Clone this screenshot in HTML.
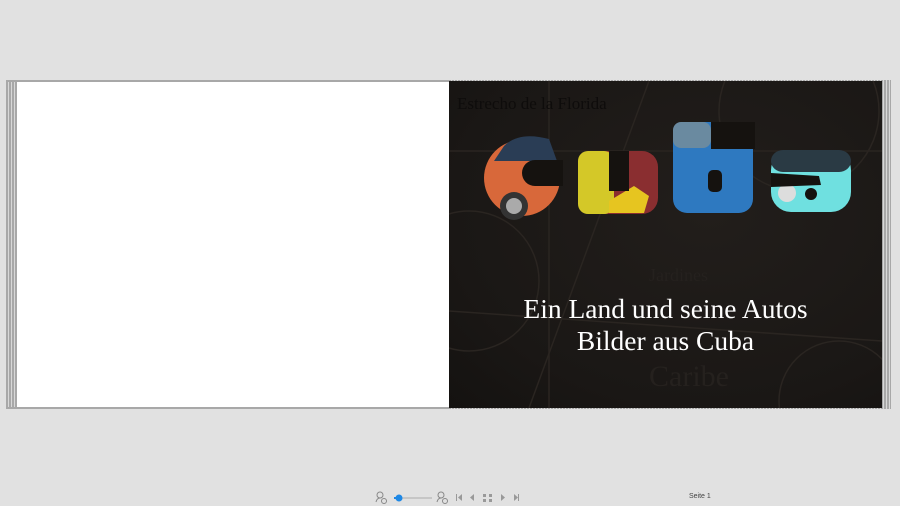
<!DOCTYPE html>
<html><head><meta charset="utf-8"><style>
html,body{margin:0;padding:0;width:900px;height:506px;background:#e1e1e1;overflow:hidden;font-family:"Liberation Sans",sans-serif;}
.abs{position:absolute}
</style></head><body>
<div class="abs" style="left:6px;top:80px;width:12px;height:329px;background:repeating-linear-gradient(90deg,#a8a8a8 0 2px,#d8d8d8 2px 3px);"></div>
<div class="abs" style="left:6px;top:80px;width:444px;height:2px;background:#a8a8a8"></div>
<div class="abs" style="left:6px;top:407px;width:444px;height:2px;background:#a8a8a8"></div>
<div class="abs" style="left:17px;top:82px;width:432px;height:325px;background:#fff"></div>
<div class="abs" style="left:449px;top:80px;width:442px;height:329px;background:repeating-linear-gradient(90deg,#a8a8a8 0 2px,#d8d8d8 2px 3px);"></div>
<div class="abs" style="left:449px;top:81px;width:433px;height:327px;background:radial-gradient(ellipse at 60% 40%,#221e1b,#1a1715 70%,#141210);overflow:hidden">
<svg width="433" height="327" style="position:absolute;left:0;top:0">
<g fill="none" stroke="#2a2521" stroke-width="1.5">
<circle cx="350" cy="30" r="80"/><circle cx="20" cy="200" r="70"/><circle cx="390" cy="320" r="60"/>
<line x1="0" y1="70" x2="433" y2="70"/><line x1="100" y1="0" x2="100" y2="327"/><line x1="0" y1="230" x2="433" y2="260"/><line x1="200" y1="0" x2="80" y2="327"/>
</g>
<text x="8" y="28" font-family="Liberation Serif" font-size="17" fill="#0e0c0b">Estrecho de la Florida</text>
<text x="200" y="305" font-family="Liberation Serif" font-size="30" fill="#25211e">Caribe</text>
<text x="200" y="200" font-family="Liberation Serif" font-size="18" fill="#25211e">Jardines</text>
<g>
<circle cx="73" cy="97" r="38" fill="#d8683a"/>
<path d="M55 65 Q70 50 100 58 L108 80 L45 80Z" fill="#2a3d55"/>
<circle cx="65" cy="125" r="14" fill="#333"/><circle cx="65" cy="125" r="8" fill="#aaa"/>
<circle cx="86" cy="92" r="13" fill="#15120f"/><rect x="86" y="79" width="28" height="26" fill="#15120f"/>
<rect x="129" y="70" width="80" height="63" rx="16" fill="#8a2e30"/>
<rect x="129" y="70" width="36" height="63" rx="10" fill="#d4c828"/>
<path d="M160 120 L185 105 L200 115 L195 132 L160 132Z" fill="#e6c520"/>
<rect x="160" y="70" width="20" height="40" fill="#15120f"/>
<rect x="224" y="41" width="80" height="91" rx="14" fill="#2e79c0"/>
<rect x="262" y="41" width="44" height="27" fill="#15120f"/>
<rect x="224" y="41" width="38" height="26" rx="8" fill="#6a8aa0"/>
<rect x="259" y="89" width="14" height="22" rx="5" fill="#15120f"/>
<rect x="322" y="69" width="80" height="62" rx="20" fill="#6fe0e0"/>
<rect x="322" y="69" width="80" height="22" rx="12" fill="#2a3a44"/>
<circle cx="338" cy="112" r="9" fill="#ddd"/>
<path d="M322 92 L370 95 L372 104 L322 106Z" fill="#15120f"/>
<circle cx="362" cy="113" r="6" fill="#15120f"/>
</g>
</svg>
<div class="abs" style="left:0;width:433px;top:212px;text-align:center;color:#fff;font-family:'Liberation Serif',serif;font-size:27.5px;line-height:32px">Ein Land und seine Autos<br>Bilder aus Cuba</div>
</div>
<svg class="abs" style="left:370px;top:488px" width="160" height="18">
<g fill="none" stroke="#888" stroke-width="1"><circle cx="10" cy="7" r="3"/><path d="M6 14 Q7 10 10 10"/><circle cx="14" cy="13" r="2.5"/>
<circle cx="71" cy="7" r="3"/><path d="M67 14 Q68 10 71 10"/><circle cx="75" cy="13" r="2.5"/></g>
<line x1="24" y1="10" x2="62" y2="10" stroke="#aaa"/><line x1="24" y1="10" x2="28" y2="10" stroke="#1e88e5" stroke-width="2"/>
<circle cx="29" cy="10" r="3.5" fill="#1e88e5"/>
<g fill="#999"><rect x="86" y="6" width="1" height="7"/><path d="M92 6 L88 9.5 L92 13Z"/><path d="M104 6 L100 9.5 L104 13Z"/>
<rect x="113" y="6" width="3" height="3"/><rect x="119" y="6" width="3" height="3"/><rect x="113" y="11" width="3" height="3"/><rect x="119" y="11" width="3" height="3"/>
<path d="M131 6 L135 9.5 L131 13Z"/><path d="M144 6 L148 9.5 L144 13Z"/><rect x="148" y="6" width="1" height="7"/></g>
</svg>
<div class="abs" style="left:689px;top:493px;font-size:7px;color:#444">Seite 1</div>
</body></html>
